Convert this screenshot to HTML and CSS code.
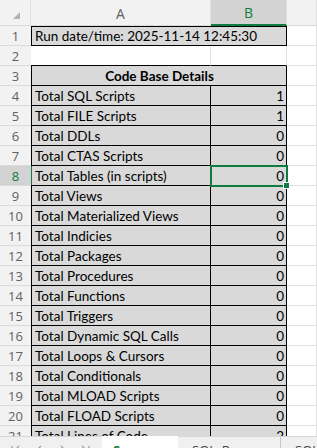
FILE: index.html
```html
<!DOCTYPE html>
<html lang="en">
<head>
    <meta charset="UTF-8">
    <meta name="viewport" content="width=device-width, initial-scale=1.0">
    <title>Code Base Details</title>
    <link rel="stylesheet" href="styles.css">
</head>
<body>
    <div class="sheet">
        <div class="row hdr">
            <div class="corner"><span class="tri"></span></div>
            <div class="ch a">A</div>
            <div class="ch b on">B</div>
            <div class="ch c"></div>
        </div>

        <div class="row"><div class="rh">1</div><div class="cell ab box top">Run date/time: 2025-11-14 12:45:30</div><div class="cell c"></div></div>
        <div class="row"><div class="rh">2</div><div class="cell a under"></div><div class="cell b under"></div><div class="cell c"></div></div>
        <div class="row"><div class="rh">3</div><div class="cell ab box title">Code Base Details</div><div class="cell c"></div></div>

        <div class="row"><div class="rh">4</div><div class="cell a box">Total SQL Scripts</div><div class="cell b box">1</div><div class="cell c"></div></div>
        <div class="row"><div class="rh">5</div><div class="cell a box">Total FILE Scripts</div><div class="cell b box">1</div><div class="cell c"></div></div>
        <div class="row"><div class="rh">6</div><div class="cell a box">Total DDLs</div><div class="cell b box">0</div><div class="cell c"></div></div>
        <div class="row"><div class="rh">7</div><div class="cell a box">Total CTAS Scripts</div><div class="cell b box">0</div><div class="cell c"></div></div>
        <div class="row"><div class="rh on">8</div><div class="cell a box hl">Total Tables (in scripts)</div><div class="cell b box sel">0<span class="handle"></span></div><div class="cell c"></div></div>
        <div class="row"><div class="rh">9</div><div class="cell a box">Total Views</div><div class="cell b box">0</div><div class="cell c"></div></div>
        <div class="row"><div class="rh">10</div><div class="cell a box">Total Materialized Views</div><div class="cell b box">0</div><div class="cell c"></div></div>
        <div class="row"><div class="rh">11</div><div class="cell a box">Total Indicies</div><div class="cell b box">0</div><div class="cell c"></div></div>
        <div class="row"><div class="rh">12</div><div class="cell a box">Total Packages</div><div class="cell b box">0</div><div class="cell c"></div></div>
        <div class="row"><div class="rh">13</div><div class="cell a box">Total Procedures</div><div class="cell b box">0</div><div class="cell c"></div></div>
        <div class="row"><div class="rh">14</div><div class="cell a box">Total Functions</div><div class="cell b box">0</div><div class="cell c"></div></div>
        <div class="row"><div class="rh">15</div><div class="cell a box">Total Triggers</div><div class="cell b box">0</div><div class="cell c"></div></div>
        <div class="row"><div class="rh">16</div><div class="cell a box">Total Dynamic SQL Calls</div><div class="cell b box">0</div><div class="cell c"></div></div>
        <div class="row"><div class="rh">17</div><div class="cell a box">Total Loops &amp; Cursors</div><div class="cell b box">0</div><div class="cell c"></div></div>
        <div class="row"><div class="rh">18</div><div class="cell a box">Total Conditionals</div><div class="cell b box">0</div><div class="cell c"></div></div>
        <div class="row"><div class="rh">19</div><div class="cell a box">Total MLOAD Scripts</div><div class="cell b box">0</div><div class="cell c"></div></div>
        <div class="row"><div class="rh">20</div><div class="cell a box">Total FLOAD Scripts</div><div class="cell b box">0</div><div class="cell c"></div></div>
        <div class="row"><div class="rh">21</div><div class="cell a box">Total Lines of Code</div><div class="cell b box">2</div><div class="cell c"></div></div>
    </div>

    <div class="tabs">
        <div class="nav">
            <svg width="102" height="14" viewBox="0 0 102 14">
                <g fill="none" stroke="#9a9a9a" stroke-width="1.2">
                    <path d="M12 9V17M19 9l-4 4 4 4"/>
                    <path d="M41 9l-4 4 4 4"/>
                    <path d="M61 9l4 4-4 4"/>
                    <path d="M82 9l4 4-4 4M89 9V17"/>
                </g>
            </svg>
        </div>
        <div class="tab active">Summary</div>
        <div class="tab">SQL_Parser</div>
        <div class="tab">SQL_Details</div>
    </div>
</body>
</html>
```

FILE: styles.css
```css
body {
    margin: 0;
    height: 448px;
    overflow: hidden;
    background: #fff;
    font-family: Lato, "Liberation Sans", sans-serif;
}
.sheet {
    height: 436px;
    overflow: hidden;
}
.row {
    display: flex;
    height: 20px;
}
.row.hdr {
    height: 26px;
}

/* headers */
.corner, .ch, .rh {
    box-sizing: border-box;
    background: #f2f2f2;
    color: #616161;
    font-family: "Open Sans", "Noto Sans", sans-serif;
    border-right: 1px solid #e1e1e1;
    border-bottom: 1px solid #dadada;
    display: flex;
    align-items: center;
    justify-content: center;
}
.corner {
    width: 31px;
    flex: none;
    position: relative;
}
.tri {
    position: absolute;
    left: 13px;
    top: 12px;
    width: 0;
    height: 0;
    border-left: 7px solid transparent;
    border-bottom: 7px solid #b3b3b3;
}
.ch {
    font-size: 14px;
    padding-top: 1px;
}
.ch.on {
    background: #d3d3d3;
    color: #107c41;
    border-bottom: 2px solid #107c41;
    justify-content: center;
}
.rh {
    width: 31px;
    flex: none;
    font-size: 13px;
    padding-top: 1px;
    border-right: none;
}
.rh.on {
    background: #d3d3d3;
    color: #107c41;
}

/* cells */
.cell {
    box-sizing: border-box;
    border-right: 1px solid #e1e1e1;
    border-bottom: 1px solid #e1e1e1;
    padding: 0 2px 0 4px;
    display: flex;
    align-items: flex-end;
    font-size: 13.5px;
    line-height: 17px;
    white-space: nowrap;
    overflow: hidden;
    color: #000;
}
.a { width: 180px; flex: none; }
.b { width: 76px; flex: none; justify-content: flex-end; }
.ab { width: 256px; flex: none; }
.c { flex: 1; }

.box {
    background: #d9d9d9;
    border-color: #000;
}
.box.a, .box.ab {
    box-shadow: inset 1px 0 #000;
}
.box.top {
    box-shadow: inset 1px 1px #000;
}
.box.hl {
    box-shadow: inset 1px 0 #107c41;
}
.under {
    border-bottom-color: #000;
}
.title {
    justify-content: center;
    font-weight: bold;
}

/* active cell */
.sel {
    position: relative;
    overflow: visible;
}
.sel::after {
    content: "";
    position: absolute;
    left: -1px;
    top: -1px;
    right: -2px;
    bottom: -2px;
    border: 2px solid #107c41;
}
.handle {
    position: absolute;
    right: -4px;
    bottom: -4px;
    width: 5px;
    height: 5px;
    background: #107c41;
    border: 1px solid #fff;
    z-index: 1;
}

/* sheet tabs */
.tabs {
    display: flex;
    height: 30px;
    background: #f0f0f0;
    border-top: 1px solid #d6d6d6;
    font-family: "Open Sans", "Noto Sans", sans-serif;
    font-size: 13px;
    line-height: 18px;
    color: #444;
}
.nav {
    width: 102px;
    flex: none;
}
.nav svg {
    display: block;
}
.tab {
    width: 103px;
    flex: none;
    box-sizing: border-box;
    padding: 4px 0 0 14px;
    border-right: 1px solid #c6c6c6;
    white-space: nowrap;
    overflow: hidden;
}
.tab.active {
    width: 76px;
    background: #fff;
    color: #107c41;
    font-weight: bold;
    padding-left: 11px;
    border-right: none;
    margin-top: -1px;
    padding-top: 5px;
}
```
